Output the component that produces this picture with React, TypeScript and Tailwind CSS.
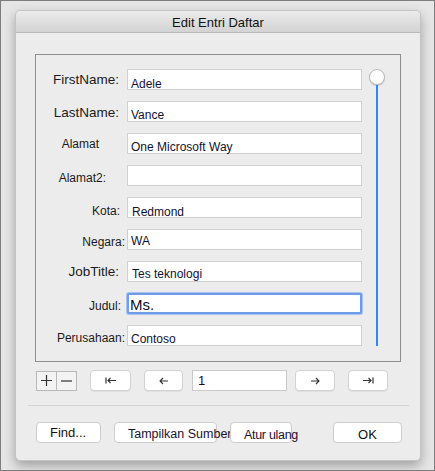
import React from 'react';

type Row = {
    label: string;
    value: string;
    labelCls: string;
    valueCls: string;
    focused?: boolean;
};

// label offsets are tuned per row, the original dialog is not quite aligned
const rows: Row[] = [
    { label: 'FirstName:', value: 'Adele', labelCls: 'text-[13.5px] pr-[8px] pt-[3px]', valueCls: 'pl-[3px] pt-[8px]' },
    { label: 'LastName:', value: 'Vance', labelCls: 'text-[13.5px] pr-[8px] pt-[4px]', valueCls: 'pl-[3px] pt-[7px]' },
    { label: 'Alamat', value: 'One Microsoft Way', labelCls: 'text-[12px] pr-[28px] pt-[4px]', valueCls: 'pl-[3px] pt-[7px]' },
    { label: 'Alamat2:', value: '', labelCls: 'text-[12px] pr-[21px] pt-[6px]', valueCls: 'pl-[3px] pt-[7px]' },
    { label: 'Kota:', value: 'Redmond', labelCls: 'text-[12px] pr-[7px] pt-[7px]', valueCls: 'pl-[4px] pt-[8px]' },
    { label: 'Negara:', value: 'WA', labelCls: 'text-[12px] pr-[2px] pt-[6px]', valueCls: 'pl-[3px] pt-[5px] text-[11px]' },
    { label: 'JobTitle:', value: 'Tes teknologi', labelCls: 'text-[13.5px] pr-[8px] pt-[3px]', valueCls: 'pl-[4px] pt-[6px]' },
    { label: 'Judul:', value: 'Ms.', labelCls: 'text-[12px] pr-[6px] pt-[6px]', valueCls: 'pl-[1px] pt-[2px] text-[15px] leading-[15px]', focused: true },
    { label: 'Perusahaan:', value: 'Contoso', labelCls: 'text-[12px] pr-[2px] pt-[6px]', valueCls: 'pl-[3px] pt-[7px]' },
];

const FirstIcon = () => (
    <svg width="11" height="7" viewBox="0 0 11 7" fill="none" stroke="#333" strokeWidth="1.2">
        <path d="M1 0.5v6" />
        <path d="M3 3.5h8M5.5 1l-2.5 2.5 2.5 2.5" />
    </svg>
);

const PrevIcon = () => (
    <svg width="9" height="8" viewBox="0 0 9 8" fill="none" stroke="#333" strokeWidth="1.1">
        <path d="M1 4h8M4 1l-3 3 3 3" />
    </svg>
);

const NextIcon = () => (
    <svg width="9" height="8" viewBox="0 0 9 8" fill="none" stroke="#333" strokeWidth="1.1">
        <path d="M0 4h8M5 1l3 3-3 3" />
    </svg>
);

const LastIcon = () => (
    <svg width="11" height="7" viewBox="0 0 11 7" fill="none" stroke="#333" strokeWidth="1.2">
        <path d="M0 3.5h8M5.5 1l2.5 2.5-2.5 2.5" />
        <path d="M10 0.5v6" />
    </svg>
);

const NavButton: React.FC<{ w: string; children: React.ReactNode }> = ({ w, children }) => (
    <div className={`${w} h-[21px] flex items-center justify-center bg-white border border-[#d2d2d2] rounded-[4px] shadow-[0_1px_0_rgba(0,0,0,0.05)]`}>
        {children}
    </div>
);

const DialogButton: React.FC<{ w: string; cls: string; children: React.ReactNode }> = ({ w, cls, children }) => (
    <div className={`${w} h-[21px] flex items-center bg-white border border-[#cdcdcd] rounded-[4px] whitespace-nowrap ${cls}`}>
        {children}
    </div>
);

const App: React.FC = () => {
    return (
        <div
            className="w-[435px] h-[471px] border border-[#7d7d7d] bg-[#e6e6e6] overflow-hidden"
            style={{ fontFamily: '"Liberation Sans", Arial, sans-serif' }}
        >
            {/* --- Dialog window --- */}
            <div className="ml-[14px] mt-[9px] w-[406px] h-[451px] bg-[#ececec] rounded-[5px] border border-[#c4c4c4] shadow-[0_5px_12px_rgba(0,0,0,0.3)] flex flex-col">

                {/* --- Title bar --- */}
                <div className="h-[22px] shrink-0 rounded-t-[5px] bg-gradient-to-b from-[#ebebeb] to-[#d3d3d3] border-b border-[#b9b9b9] flex items-center justify-center">
                    <span className="text-[13px] text-[#111] pt-[2px]">Edit Entri Daftar</span>
                </div>

                {/* --- Entry box --- */}
                <div className="ml-[19px] mt-[21px] w-[366px] h-[308px] border border-[#8e8e8e] flex">
                    <div className="flex flex-col gap-[11px] pt-[14px]">
                        {rows.map(row => (
                            <div key={row.label} className="flex items-start h-[21px]">
                                <div className={`w-[91px] text-right leading-[15px] text-[#1b1b1b] whitespace-nowrap ${row.labelCls}`}>
                                    {row.label}
                                </div>
                                {row.focused ? (
                                    <div className="w-[235px] h-[21px] bg-white border-2 border-[#6d9ce9] shadow-[0_0_0_1px_#a9c3ee] rounded-[2px]">
                                        <div className={`text-[#0d0d1f] ${row.valueCls}`}>{row.value}</div>
                                    </div>
                                ) : (
                                    <div className="w-[235px] h-[21px] bg-white border border-[#d0d0d0]">
                                        <div className={`text-[12px] leading-[12px] text-[#121232] whitespace-nowrap ${row.valueCls}`}>{row.value}</div>
                                    </div>
                                )}
                            </div>
                        ))}
                    </div>

                    {/* --- Vertical slider --- */}
                    <div className="ml-[7px] pt-[14px] flex flex-col items-center w-[16px]">
                        <div className="w-[16px] h-[16px] rounded-full bg-white border border-[#b9b9b9] shadow-[0_1px_1px_rgba(0,0,0,0.15)] shrink-0" />
                        <div className="w-[2px] h-[261px] bg-[#3b80f4]" />
                    </div>
                </div>

                {/* --- Record navigation --- */}
                <div className="flex items-center ml-[20px] mt-[8px] h-[21px]">
                    <div className="w-[41px] h-[20px] flex border border-[#b8b8b8] bg-[#f3f3f3]">
                        <div className="w-[20px] h-full flex items-center justify-center border-r border-[#b8b8b8]">
                            <svg width="11" height="11" viewBox="0 0 11 11" stroke="#333" strokeWidth="1.2">
                                <path d="M5.5 0v11M0 5.5h11" />
                            </svg>
                        </div>
                        <div className="flex-1 h-full flex items-center justify-center">
                            <svg width="11" height="2" viewBox="0 0 11 2" stroke="#333" strokeWidth="1.2">
                                <path d="M0 1h11" />
                            </svg>
                        </div>
                    </div>
                    <div className="ml-[13px]"><NavButton w="w-[41px]"><FirstIcon /></NavButton></div>
                    <div className="ml-[13px]"><NavButton w="w-[39px]"><PrevIcon /></NavButton></div>
                    <div className="ml-[9px] w-[95px] h-[21px] bg-white border border-[#c9c9c9] text-[13px] text-[#111] pl-[5px] leading-[19px]">1</div>
                    <div className="ml-[8px]"><NavButton w="w-[40px]"><NextIcon /></NavButton></div>
                    <div className="ml-[13px]"><NavButton w="w-[40px]"><LastIcon /></NavButton></div>
                </div>

                {/* --- Separator --- */}
                <div className="ml-[12px] mr-[11px] mt-[14px] h-px bg-[#d5d5d5]" />

                {/* --- Dialog buttons --- */}
                <div className="flex items-center ml-[20px] mt-[16px]">
                    <DialogButton w="w-[65px]" cls="pl-[13px] text-[13px] text-[#111]">Find...</DialogButton>
                    <div className="ml-[13px]">
                        <DialogButton w="w-[103px]" cls="pl-[13px] pt-[3px] text-[12.5px] text-[#1e1030]">Tampilkan Sumber</DialogButton>
                    </div>
                    <div className="ml-[13px]">
                        <DialogButton w="w-[62px]" cls="pl-[13px] pt-[5px] text-[12.5px] text-[#1e1030] tracking-[-0.3px]">Atur ulang</DialogButton>
                    </div>
                    <div className="ml-[41px]">
                        <DialogButton w="w-[69px]" cls="justify-center pt-[5px] text-[13px] text-[#111]">OK</DialogButton>
                    </div>
                </div>
            </div>
        </div>
    );
};

export default App;
